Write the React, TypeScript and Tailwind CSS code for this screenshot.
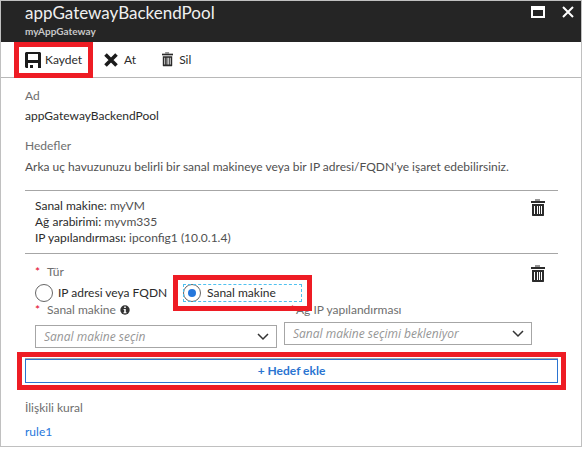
import React, { useState } from "react";

function TrashIcon({ className }: { className?: string }) {
  return (
    <svg viewBox="0 0 14 18" className={className} aria-hidden="true" preserveAspectRatio="none">
      <rect x="4" y="0" width="5" height="2" fill="currentColor" opacity="0.5" />
      <rect x="0" y="2" width="14" height="2" fill="currentColor" />
      <path fill="currentColor" fillRule="evenodd" d="M1 5h12v11.5l-.5.5h-11l-.5-.5zM3 7v8h1V7zM6 7v8h1V7zM8 7v8h1V7zM10 7v8h1V7z" />
    </svg>
  );
}

function SaveIcon() {
  return (
    <svg viewBox="0 0 16 16" className="h-4 w-4 shrink-0" aria-hidden="true">
      <path fill="#1b1b1b" fillRule="evenodd" d="M1 0h14l1 1v15h-3v-5H3v5H1l-1-1V1zM3 2v6h10V2z" />
      <path fill="#1b1b1b" d="M5 13h3v3H5z" />
    </svg>
  );
}

function DiscardIcon() {
  return (
    <svg viewBox="0 0 14 14" className="h-[14px] w-[14px] shrink-0" aria-hidden="true">
      <path d="M1.5 1.5l11 11M12.5 1.5l-11 11" stroke="#1b1b1b" strokeWidth="3.6" />
    </svg>
  );
}

function InfoIcon() {
  return (
    <svg viewBox="0 0 10 10" className="h-[10px] w-[10px]" aria-hidden="true">
      <circle cx="5" cy="5" r="4.7" fill="#333" />
      <path fill="#fff" d="M4.2 1.5h1.6V3H4.2zM3.5 4h2.3v3.3h.7v.9h-3v-.9h.7V4.8h-.7z" />
    </svg>
  );
}

function Highlight({ className }: { className: string }) {
  return <span aria-hidden="true" className={`pointer-events-none absolute z-10 border-5 border-[#ee1c24] ${className}`} />;
}

function Picker({ id, placeholder }: { id: string; placeholder: string }) {
  return (
    <div className="relative">
      <select
        id={id}
        defaultValue=""
        className="block h-[23px] w-full appearance-none border border-[#a6a6a6] bg-white pr-6 pl-2 font-['Open_Sans','Noto_Sans',sans-serif] text-xs leading-4 text-[#969696] italic outline-none"
      >
        <option value="">{placeholder}</option>
      </select>
      <svg viewBox="0 0 12 8" className="pointer-events-none absolute top-2 right-2 h-2 w-3" aria-hidden="true">
        <path d="M1 1l5 5 5-5" fill="none" stroke="#333" strokeWidth="1.5" />
      </svg>
    </div>
  );
}

const radioClass =
  "grid h-[18px] w-[18px] shrink-0 appearance-none place-content-center rounded-full border border-[#666] bg-white before:h-2 before:w-2 before:rounded-full checked:before:bg-[#2577dc]";

export default function App() {
  const [kind, setKind] = useState("vm");
  return (
    <main className="border border-[#c0c0c0] bg-white font-['Lato','Open_Sans',sans-serif] text-xs leading-4 text-[#2b2b2b]">
      <header className="flex h-[41px] justify-between bg-[#252525] pr-[7px] pl-6">
        <div>
          <h1 className="text-[17px] leading-6 text-[#f0f0f0]">appGatewayBackendPool</h1>
          <p className="text-[10px] leading-3 font-bold text-[#c8c8c8]">myAppGateway</p>
        </div>
        <div className="flex items-start gap-[17px] pt-[5px]">
          <button type="button" aria-label="Ekranı kapla" className="h-3 w-[14px] border-2 border-t-4 border-white" />
          <button type="button" aria-label="Kapat">
            <svg viewBox="0 0 12 12" className="h-3 w-3" aria-hidden="true">
              <path d="M1 1l10 10M11 1L1 11" stroke="#fff" strokeWidth="2" />
            </svg>
          </button>
        </div>
      </header>

      <div className="flex h-9 items-center border-b border-[#b8b8b8] pl-6">
        <button type="button" className="relative flex items-center gap-1">
          <SaveIcon />
          Kaydet
          <Highlight className="-inset-x-[11px] -inset-y-[10px]" />
        </button>
        <button type="button" className="ml-[22px] flex items-center gap-[6px]">
          <DiscardIcon />
          At
        </button>
        <button type="button" className="ml-[26px] flex items-center gap-[6px]">
          <TrashIcon className="h-[15px] w-[11px]" />
          Sil
        </button>
      </div>

      <div className="pt-[10px] pr-[23px] pb-[6px] pl-6">
        <h2 className="text-[#6e6e6e]">Ad</h2>
        <p className="mt-1">appGatewayBackendPool</p>
        <h2 className="mt-[14px] text-[#6e6e6e]">Hedefler</h2>
        <p className="mt-[5px] text-[#505050]">
          Arka uç havuzunuzu belirli bir sanal makineye veya bir IP adresi/FQDN’ye işaret edebilirsiniz.
        </p>

        <section className="mt-[15px] flex items-start justify-between border-y border-[#a6a6a6] py-[7px] pr-[13px] pl-[10px]">
          <ul>
            <li>Sanal makine: <span className="text-[#505050]">myVM</span></li>
            <li>Ağ arabirimi: <span className="text-[#505050]">myvm335</span></li>
            <li>IP yapılandırması: <span className="text-[#505050]">ipconfig1 (10.0.1.4)</span></li>
          </ul>
          <button type="button" aria-label="Hedefi sil" className="mt-px">
            <TrashIcon className="h-[18px] w-[14px]" />
          </button>
        </section>

        <section className="pt-[10px] pl-[10px]">
          <div className="flex items-start justify-between pr-[13px]">
            <fieldset>
              <legend className="flex text-[#6e6e6e]">
                <span className="w-3 text-[#e3001b]">*</span>Tür
              </legend>
              <div className="mt-1 flex">
                <label className="flex w-[148px] items-center gap-[5px] whitespace-nowrap">
                  <input type="radio" name="kind" className={radioClass} checked={kind === "ip"} onChange={() => setKind("ip")} />
                  IP adresi veya FQDN
                </label>
                <label className="relative flex w-[119px] items-center gap-[6px] outline-1 -outline-offset-1 outline-[#4fc1f0] outline-dashed">
                  <input type="radio" name="kind" className={radioClass} checked={kind === "vm"} onChange={() => setKind("vm")} />
                  Sanal makine
                  <Highlight className="-inset-x-[10px] -inset-y-[9px]" />
                </label>
              </div>
            </fieldset>
            <button type="button" aria-label="Hedefi sil" className="mt-px">
              <TrashIcon className="h-[18px] w-[14px]" />
            </button>
          </div>

          <div className="grid grid-cols-[242fr_248fr] gap-[7px] pr-[26px]">
            <div>
              <label htmlFor="vm" className="mb-[7px] flex items-center text-[#6e6e6e]">
                <span className="w-3 text-[#e3001b]">*</span>Sanal makine
                <span className="ml-1"><InfoIcon /></span>
              </label>
              <Picker id="vm" placeholder="Sanal makine seçin" />
            </div>
            <div>
              <label htmlFor="ipconfig" className="mb-1 flex pl-[6px] text-[#6e6e6e]">
                <span className="w-[6px] text-[#e3001b]">*</span>Ağ IP yapılandırması
              </label>
              <Picker id="ipconfig" placeholder="Sanal makine seçimi bekleniyor" />
            </div>
          </div>
        </section>

        <div className="relative mt-[10px] border-t border-[#a6a6a6]">
          <button type="button" className="block h-6 w-full border border-[#2b74d1] bg-white font-bold text-[#2b74d1]">
            + Hedef ekle
          </button>
          <Highlight className="-inset-x-2 -inset-y-[7px]" />
        </div>

        <h2 className="mt-[17px] text-[#6e6e6e]">İlişkili kural</h2>
        <a href="#rule1" className="mt-2 block w-fit text-[#2577dc]">rule1</a>
      </div>
    </main>
  );
}
